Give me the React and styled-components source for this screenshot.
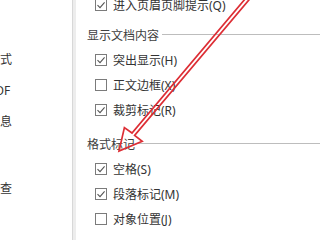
import React from "react";
import styled, { createGlobalStyle } from "styled-components";

const Global = createGlobalStyle`
  html, body {
    margin: 0;
    padding: 0;
    width: 320px;
    height: 240px;
    overflow: hidden;
    background: #ffffff;
  }
  body {
    font-family: "Noto Sans", "Noto Sans CJK SC", sans-serif;
  }
`;

const Page = styled.div`
  position: relative;
  display: flex;
  width: 320px;
  height: 240px;
  overflow: hidden;
  background: #ffffff;
`;

const Sidebar = styled.div`
  width: 72px;
  flex: none;
  overflow: hidden;
  background: #ffffff;
`;

const NavList = styled.ul`
  list-style: none;
  margin: -18px 0 0 -36px;
  padding: 0;
  width: 120px;
`;

const NavItem = styled.li`
  height: 31px;
  line-height: 31px;
  margin-top: ${(p) => p.$extra || 0}px;
  font-size: 12px;
  color: #333333;
  white-space: nowrap;
`;

const Divider = styled.div`
  width: 3px;
  flex: none;
  border-left: 1px solid #d8d8d8;
  background: #ededed;
`;

const Content = styled.div`
  flex: 1;
  min-width: 0;
  padding-left: 11px;
  margin-top: -8px;
  overflow: hidden;
`;

const Section = styled.div`
  margin-top: ${(p) => p.$top || 0}px;
`;

const Header = styled.div`
  display: flex;
  align-items: center;
  gap: 3px;
  height: 25px;
  font-size: 12px;
  color: #404040;
  white-space: nowrap;
  &::after {
    content: "";
    flex: 1;
    height: 1px;
    background: #bdbdbd;
  }
`;

const Row = styled.label`
  display: flex;
  align-items: center;
  gap: 6px;
  height: 25px;
  padding-left: 8px;
  font-size: 12px;
  color: #333333;
  white-space: nowrap;
`;

const Box = styled.span`
  box-sizing: border-box;
  width: 12px;
  height: 12px;
  flex: none;
  border: 1px solid #7b7b7b;
  background: #ffffff;
  display: flex;
  align-items: center;
  justify-content: center;
`;

const Overlay = styled.svg`
  position: absolute;
  left: 0;
  top: 0;
  width: 320px;
  height: 240px;
  pointer-events: none;
`;

function Check({ checked, children }) {
  return (
    <Row>
      <Box>
        {checked && (
          <svg width="10" height="10" viewBox="0 0 10 10">
            <path
              d="M1.5 5.2 L4 7.6 L8.6 2.4"
              fill="none"
              stroke="#555555"
              strokeWidth="1.1"
            />
          </svg>
        )}
      </Box>
      <span>{children}</span>
    </Row>
  );
}

const navItems = [
  { t: "编辑" },
  { t: "修订" },
  { t: "中文版式" },
  { t: "输出PDF" },
  { t: "用户信息" },
  { t: "打印" },
  { t: "拼写检查", extra: 5 },
  { t: "安全性" },
  { t: "信任中心" },
];

export default function App() {
  return (
    <>
      <Global />
      <Page>
        <Sidebar>
          <NavList>
            {navItems.map((n) => (
              <NavItem key={n.t} $extra={n.extra}>
                {n.t}
              </NavItem>
            ))}
          </NavList>
        </Sidebar>
        <Divider />
        <Content>
          <Check checked>进入页眉页脚提示(Q)</Check>
          <Section $top={5}>
            <Header>显示文档内容</Header>
            <Check checked>突出显示(H)</Check>
            <Check>正文边框(X)</Check>
            <Check checked>裁剪标记(R)</Check>
          </Section>
          <Section $top={9}>
            <Header>格式标记</Header>
            <Check checked>空格(S)</Check>
            <Check checked>段落标记(M)</Check>
            <Check>对象位置(J)</Check>
          </Section>
        </Content>
        <Overlay viewBox="0 0 320 240">
          <polygon
            points="251.4,-3 134.6,135.4 142.2,141.2 119,151 124.4,127.6 132,133 248.6,-5.2"
            fill="none"
            stroke="#dd2e35"
            strokeWidth="1.7"
            strokeLinejoin="miter"
          />
        </Overlay>
      </Page>
    </>
  );
}
